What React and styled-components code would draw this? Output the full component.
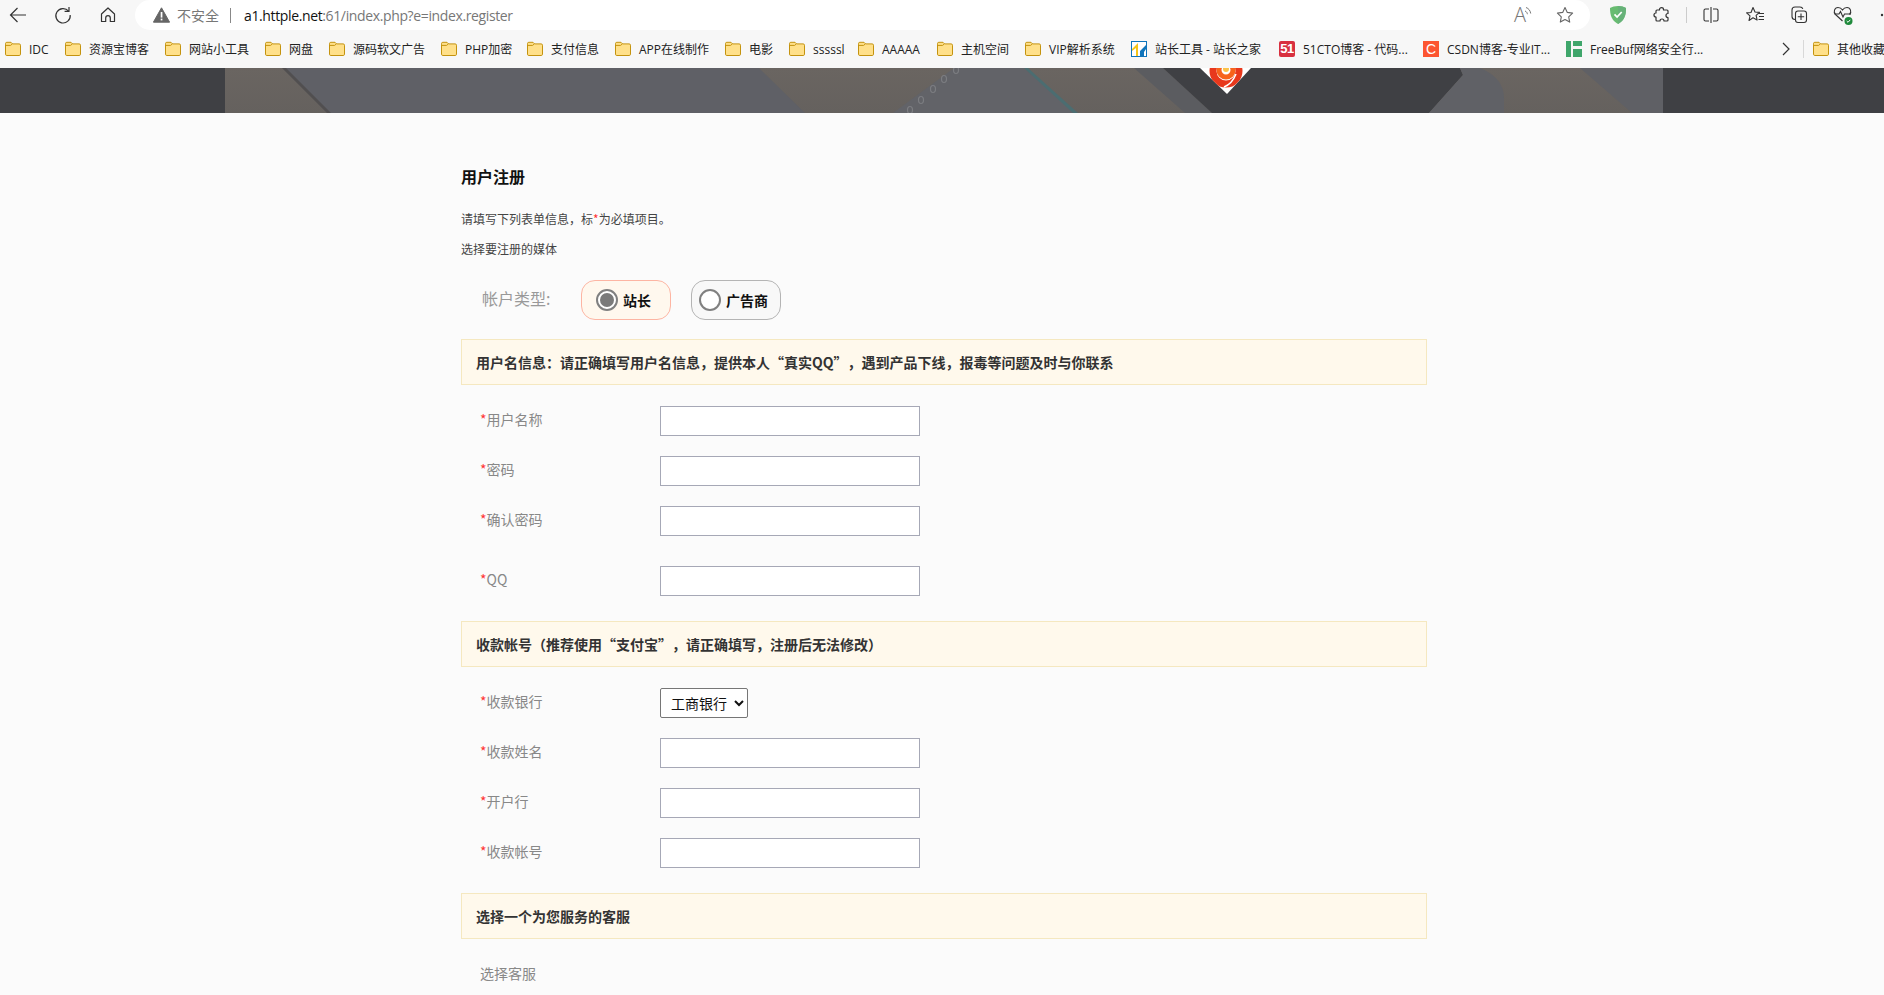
import React from "react";
import styled, { createGlobalStyle } from "styled-components";

const CN = `"Noto Sans CJK SC", "Noto Sans", sans-serif`;
const UI = `"Open Sans", "Noto Sans CJK SC", sans-serif`;

const GlobalStyle = createGlobalStyle`
  html, body {
    margin: 0;
    height: 995px;
    overflow: hidden;
    background: #fbfbfb;
    font-family: ${CN};
  }
  * { box-sizing: border-box; }
`;

const Toolbar = styled.div`
  height: 30px;
  background: #f7f7f7;
  display: flex;
  align-items: center;
`;

const NavGroup = styled.div`
  display: flex;
  gap: 9px;
  width: 135px;
  flex: none;
`;

const NavSlot = styled.span`
  width: 36px;
  height: 30px;
  display: flex;
  align-items: center;
  justify-content: center;
  color: #333;
`;

const Omnibox = styled.div`
  width: 1455px;
  height: 30px;
  flex: none;
  background: #fff;
  border-radius: 15px;
  display: flex;
  align-items: center;
  padding: 0 15px 0 18px;
`;

const Insecure = styled.span`
  font: 14px ${CN};
  color: #777;
  margin-left: 7px;
`;

const UrlDivider = styled.i`
  width: 1px;
  height: 15px;
  background: #888;
  margin: 0 13px 0 11px;
`;

const Url = styled.span`
  font: 14px ${UI};
  letter-spacing: -0.37px;
  color: #777;
  b { font-weight: 400; color: #111; }
`;

const OmniIcons = styled.div`
  margin-left: auto;
  display: flex;
  align-items: center;
  gap: 19px;
`;

const ReadAloud = styled.span`
  display: flex;
  align-items: flex-start;
  font: 300 20px "Open Sans", sans-serif;
  line-height: 22px;
  color: #777;
  width: 22px;
`;

const Tools = styled.div`
  display: flex;
  align-items: center;
  margin-left: 6px;
  flex: 1;
`;

const ToolSlot = styled.span`
  width: 44px;
  height: 30px;
  flex: none;
  display: flex;
  align-items: center;
  justify-content: center;
  color: #333;
`;

const ToolDivider = styled.i`
  width: 1px;
  height: 16px;
  background: #ccc;
  flex: none;
  margin: 0 2px;
`;

const MoreDots = styled.span`
  margin-left: 15px;
  display: flex;
`;

const Bookmarks = styled.div`
  height: 38px;
  background: #f7f7f7;
  display: flex;
  align-items: center;
  padding-left: 5px;
  overflow: hidden;
`;

const Bookmark = styled.span`
  width: ${(p) => p.$w}px;
  flex: none;
  display: flex;
  align-items: center;
  gap: 8px;
  font: 12px ${UI};
  color: #222;
  white-space: nowrap;
`;

const Chevron = styled.span`
  width: 31px;
  flex: none;
  display: flex;
  padding-left: 9px;
  color: #333;
`;

const BarDivider = styled.i`
  width: 1px;
  height: 18px;
  background: #d8d8d8;
  flex: none;
  margin-right: 9px;
`;

const Favicon51 = styled.span`
  width: 16px;
  height: 16px;
  flex: none;
  background: #d8303f;
  color: #fff;
  border-radius: 2px;
  font: 700 13px/16px "Liberation Sans", sans-serif;
  letter-spacing: -0.5px;
  text-align: center;
`;

const FaviconC = styled.span`
  width: 16px;
  height: 16px;
  flex: none;
  background: #fc5531;
  color: #fff;
  font: 400 14px/16px "Liberation Sans", sans-serif;
  text-align: center;
`;

const Hero = styled.svg`
  display: block;
  width: 100%;
  height: 45px;
`;

const Main = styled.main`
  width: 966px;
  margin-left: 461px;
  padding-top: 51px;
`;

const Title = styled.h1`
  margin: 0;
  font: 700 16px/24px ${CN};
  color: #111;
`;

const Hint = styled.p`
  margin: ${(p) => p.$top}px 0 0;
  font: 12px/20px ${CN};
  color: #444;
`;

const Req = styled.span`
  color: #f33;
`;

const TypeRow = styled.div`
  margin-top: 21px;
  padding-left: 21px;
  display: flex;
  align-items: center;
  gap: 20px;
  height: 40px;
`;

const TypeLabel = styled.span`
  width: 79px;
  font: 16px/20px ${CN};
  color: #999;
  white-space: nowrap;
  margin-top: -5px;
`;

const Pill = styled.label`
  width: 90px;
  height: 40px;
  display: flex;
  align-items: center;
  gap: 5px;
  padding-left: ${(p) => (p.$active ? 14 : 7)}px;
  border-radius: 14px;
  border: 1px solid ${(p) => (p.$active ? "#fdb5a3" : "#b4b4b4")};
  background: ${(p) => (p.$active ? "#fff8ee" : "#f8f8f8")};
  font: 700 14px/20px ${CN};
  color: #111;
`;

const Radio = styled.input.attrs({ type: "radio" })`
  appearance: none;
  width: 22px;
  height: 22px;
  margin: 0;
  flex: none;
  border-radius: 50%;
  border: 2px solid #808080;
  background: #fff;
  display: grid;
  place-items: center;
  &:checked::before {
    content: "";
    width: 14px;
    height: 14px;
    border-radius: 50%;
    background: #7a7a7a;
  }
`;

const Notice = styled.div`
  margin-top: ${(p) => p.$top}px;
  height: 46px;
  display: flex;
  align-items: center;
  padding-left: 14px;
  background: #fff9ec;
  border: 1px solid #f5e8c0;
  font: 700 14px ${CN};
  color: #333;
  text-spacing-trim: space-all;
`;

const Field = styled.div`
  margin-top: ${(p) => p.$top}px;
  padding-left: 19px;
  display: flex;
  align-items: center;
`;

const FieldLabel = styled.span`
  width: 180px;
  font: 14px/20px ${CN};
  color: #888;
  margin-top: -4px;
`;

const TextInput = styled.input`
  width: 260px;
  height: 30px;
  border: 1px solid #a6a8b6;
  background: #fff;
  border-radius: 0;
  outline: none;
`;

const BankSelect = styled.select`
  width: 88px;
  height: 30px;
  padding-left: 6px;
  border: 1px solid #767676;
  border-radius: 2px;
  background: #fff;
  font: 14px ${CN};
  color: #111;
`;

const ServiceLabel = styled.div`
  margin-top: 24px;
  padding-left: 19px;
  font: 14px/20px ${CN};
  color: #888;
`;

const Folder = () => (
  <svg width="16" height="16" viewBox="0 0 16 16" style={{ flex: "none" }}>
    <path d="M.5 3.800V2.600C.5 1.800 1 1.300 1.800 1.300H6l1.600 1.600h6.600c.8 0 1.300.5 1.300 1.300v9c0 .8-.5 1.300-1.300 1.300H1.800c-.8 0-1.300-.5-1.300-1.300z" fill="#ffe08a" stroke="#c4930f" strokeWidth="1" />
    <path d="M.5 4.400H5.600L7.400 2.900" fill="none" stroke="#c4930f" strokeWidth="1" />
  </svg>
);

const ChinazIcon = () => (
  <svg width="16" height="16" viewBox="0 0 16 16" style={{ flex: "none" }}>
    <rect x=".5" y=".5" width="15" height="15" fill="#fff" stroke="#0f74bb" />
    <path d="M1 8 7 2v13H5V7L1 10z" fill="#f5c518" />
    <path d="M9 15V10l6-6v4l-2 3v4z" fill="#0f74bb" />
  </svg>
);

const FreeBufIcon = () => (
  <svg width="16" height="16" viewBox="0 0 16 16" style={{ flex: "none" }}>
    <rect x="0" y="0" width="5" height="16" fill="#3fa66b" />
    <rect x="7" y="0" width="9" height="5" fill="#3fa66b" />
    <rect x="7" y="8" width="9" height="8" fill="#3fa66b" />
  </svg>
);

const BackIcon = () => (
  <svg width="20" height="20" viewBox="0 0 20 20" fill="none" stroke="currentColor" strokeWidth="1.2">
    <path d="M18 10H2.500M9.500 3l-7 7 7 7" />
  </svg>
);

const RefreshIcon = () => (
  <svg width="20" height="20" viewBox="0 0 20 20" fill="none" stroke="currentColor" strokeWidth="1.2">
    <path d="M15.600 6.200A7.200 7.200 0 1 0 17.200 10" />
    <path d="M16 2v4.400h-4.400" />
  </svg>
);

const HomeIcon = () => (
  <svg width="20" height="20" viewBox="0 0 20 20" fill="none" stroke="currentColor" strokeWidth="1.2">
    <path d="M10 3 3.500 9v7.500h4.200V13a2.300 2.300 0 0 1 4.600 0v3.500h4.200V9z" strokeLinejoin="round" />
  </svg>
);

const WarnIcon = () => (
  <svg width="17" height="16" viewBox="0 0 17 16">
    <path d="M8.500.8 16.600 15.200H.4z" fill="#666" stroke="#666" strokeLinejoin="round" />
    <rect x="7.700" y="5" width="1.700" height="5.600" fill="#fff" />
    <rect x="7.700" y="11.600" width="1.700" height="1.800" fill="#fff" />
  </svg>
);

const WavesIcon = () => (
  <svg width="8" height="12" viewBox="0 0 8 12" fill="none" stroke="#777" strokeWidth="1" style={{ marginLeft: -2, marginTop: 1 }}>
    <path d="M1 6c1.500.5 2.200 1.800 2.400 3.200M2 2.500c2.800 1 4.300 3.200 4.700 6" />
  </svg>
);

const StarIcon = () => (
  <svg width="20" height="20" viewBox="0 0 20 20" fill="none" stroke="#666" strokeWidth="1.1" strokeLinejoin="round">
    <path d="m10 2.500 2.300 4.900 5.300.7-3.900 3.700 1 5.300L10 14.500l-4.700 2.600 1-5.300-3.900-3.700 5.300-.7z" />
  </svg>
);

const ShieldIcon = () => (
  <svg width="18" height="20" viewBox="0 0 18 20">
    <path d="M9 1C6 1 3 1.800 1 3c0 7 1.500 12.500 8 16 6.500-3.500 8-9 8-16-2-1.200-5-2-8-2z" fill="#68bc71" />
    <path d="M9 1c3 0 6 .8 8 2 0 7-1.500 12.500-8 16z" fill="#67b279" />
    <path d="m5.500 9.300 2.600 2.700 4.600-5" fill="none" stroke="#fff" strokeWidth="1.7" />
  </svg>
);

const PuzzleIcon = () => (
  <svg width="20" height="20" viewBox="0 0 20 20" fill="none" stroke="currentColor" strokeWidth="1.2" strokeLinejoin="round">
    <path d="M7.500 4.500c0-2.500 4-2.500 4 0V5H15c.6 0 1 .4 1 1v2.500c-2.700 0-2.700 4 0 4V15c0 .6-.4 1-1 1h-3c0-2.700-4-2.700-4 0H5c-.6 0-1-.4-1-1v-3c-2.700 0-2.700-4 0-4V6c0-.6.4-1 1-1h2.500z" />
  </svg>
);

const SplitIcon = () => (
  <svg width="18" height="18" viewBox="0 0 18 18" fill="none" stroke="currentColor" strokeWidth="1.1">
    <path d="M7 3H3.500A1.500 1.500 0 0 0 2 4.500v9A1.500 1.500 0 0 0 3.500 15H7M11 3h3.500A1.500 1.500 0 0 1 16 4.500v9a1.500 1.500 0 0 1-1.500 1.500H11M9 1v16" />
  </svg>
);

const FavoritesIcon = () => (
  <svg width="20" height="20" viewBox="0 0 20 20" fill="none" stroke="currentColor" strokeWidth="1.1" strokeLinejoin="round">
    <path d="M8 2.500 10 7l4.500.4-3.400 3 1 4.600L8 12.700 4 15.500l1-4.600-3.400-3L6 7.500z" />
    <path d="M13.500 8.500H19M14 11.500h5M13.500 14.500H19" />
  </svg>
);

const CollectionsIcon = () => (
  <svg width="20" height="20" viewBox="0 0 20 20" fill="none" stroke="currentColor" strokeWidth="1.1">
    <path d="M6 14.500c-2 0-3-1-3-3V5c0-2 1-3 3-3h5c1.500 0 2.500.7 2.800 2" />
    <rect x="6.500" y="6" width="11" height="11.500" rx="2.500" />
    <path d="M12 8.500v6.500M8.800 11.800h6.400" />
  </svg>
);

const HealthIcon = () => (
  <svg width="22" height="22" viewBox="0 0 22 22" fill="none">
    <path d="M10.500 17 3.500 10.500C1 8 2.500 3.500 6 3.500c2 0 3.500 1 4.500 2.500 1-1.500 2.500-2.500 4.500-2.500 3.500 0 5 4.500 2.500 7" stroke="currentColor" strokeWidth="1.1" />
    <path d="M2.500 10H7l1.500-2.500L11 13l1.500-3H19" stroke="currentColor" strokeWidth="1.1" />
    <circle cx="16.500" cy="17" r="4" fill="#1f8a3c" />
    <path d="m14.700 17 1.300 1.300 2.300-2.500" stroke="#fff" strokeWidth="1" />
  </svg>
);

const MoreIcon = () => (
  <svg width="4" height="4" viewBox="0 0 4 4">
    <circle cx="2" cy="2" r="1.2" fill="#333" />
  </svg>
);

const ChevronIcon = () => (
  <svg width="10" height="14" viewBox="0 0 10 14" fill="none" stroke="currentColor" strokeWidth="1.2">
    <path d="m2 1 6 6-6 6" />
  </svg>
);

const bookmarks = [
  ["IDC", 60],
  ["资源宝博客", 100],
  ["网站小工具", 100],
  ["网盘", 64],
  ["源码软文广告", 112],
  ["PHP加密", 86],
  ["支付信息", 88],
  ["APP在线制作", 110],
  ["电影", 64],
  ["sssssl", 69],
  ["AAAAA", 79],
  ["主机空间", 88],
  ["VIP解析系统", 106],
];

const banks = ["工商银行", "建设银行", "农业银行", "招商银行", "支付宝"];

function HeroArt() {
  return (
    <Hero viewBox="0 0 1884 45" preserveAspectRatio="none">
      <defs>
        <clipPath id="logoClip">
          <path d="M1200 0h51l-24 26z" />
        </clipPath>
        <linearGradient id="wood" x1="0" y1="0" x2="0" y2="1">
          <stop offset="0" stopColor="#6a6561" />
          <stop offset="1" stopColor="#65615e" />
        </linearGradient>
      </defs>
      <rect width="1884" height="45" fill="#3f4044" />
      <rect x="225" width="1438" height="45" fill="url(#wood)" />
      <path d="M284 0h475l46 45H329z" fill="#5f6066" />
      <path d="M282 0 327 45h4L286 0z" fill="#514f50" />
      <path d="M954 0h70l51 45H893z" fill="#626368" />
      <path d="M1024 0h4l50 45h-5z" fill="#4b6d71" />
      <g fill="none" stroke="#7c7d81" strokeWidth="1.2">
        <ellipse cx="956" cy="2" rx="2.500" ry="3.500" />
        <ellipse cx="944" cy="11" rx="2.500" ry="3.500" />
        <ellipse cx="933" cy="21" rx="2.500" ry="3.500" />
        <ellipse cx="921" cy="32" rx="2.500" ry="3.500" />
        <ellipse cx="910" cy="42" rx="2.500" ry="3.500" />
      </g>
      <path d="M1134 0h29l49 45h-27z" fill="#5b5c60" />
      <path d="M1163 0h297l3 7-34 38h-217z" fill="#3f4044" />
      <path d="M1460 0l3 7-34 38h75V30q0-20-24-30z" fill="#606166" />
      <path d="M1580 0h83v45h-31z" fill="#5f6065" />
      <path d="M1200 0h51l-24 26z" fill="#fff" />
      <g clipPath="url(#logoClip)" fill="none">
        <circle cx="1226" cy="3" r="13" stroke="#e8381c" strokeWidth="7" />
        <circle cx="1226" cy="2" r="7" stroke="#f7631b" strokeWidth="5" />
        <circle cx="1226" cy="1" r="3" fill="#fbc34a" />
        <path d="M1236 6q-4 10-12 13" stroke="#fff" strokeWidth="1.5" />
      </g>
    </Hero>
  );
}

function Row({ label, top, children }) {
  return (
    <Field $top={top}>
      <FieldLabel>
        <Req>*</Req>
        {label}
      </FieldLabel>
      {children}
    </Field>
  );
}

export default function App() {
  return (
    <>
      <GlobalStyle />
      <Toolbar>
        <NavGroup>
          <NavSlot><BackIcon /></NavSlot>
          <NavSlot><RefreshIcon /></NavSlot>
          <NavSlot><HomeIcon /></NavSlot>
        </NavGroup>
        <Omnibox>
          <WarnIcon />
          <Insecure>不安全</Insecure>
          <UrlDivider />
          <Url><b>a1.httple.net</b>:61/index.php?e=index.register</Url>
          <OmniIcons>
            <ReadAloud>A<WavesIcon /></ReadAloud>
            <StarIcon />
          </OmniIcons>
        </Omnibox>
        <Tools>
          <ToolSlot><ShieldIcon /></ToolSlot>
          <ToolSlot><PuzzleIcon /></ToolSlot>
          <ToolDivider />
          <ToolSlot><SplitIcon /></ToolSlot>
          <ToolSlot><FavoritesIcon /></ToolSlot>
          <ToolSlot><CollectionsIcon /></ToolSlot>
          <ToolSlot><HealthIcon /></ToolSlot>
          <MoreDots><MoreIcon /></MoreDots>
        </Tools>
      </Toolbar>
      <Bookmarks>
        {bookmarks.map(([name, w]) => (
          <Bookmark key={name} $w={w}>
            <Folder />
            {name}
          </Bookmark>
        ))}
        <Bookmark $w={148}><ChinazIcon />站长工具 - 站长之家</Bookmark>
        <Bookmark $w={144}><Favicon51>51</Favicon51>51CTO博客 - 代码...</Bookmark>
        <Bookmark $w={143}><FaviconC>C</FaviconC>CSDN博客-专业IT...</Bookmark>
        <Bookmark $w={206}><FreeBufIcon />FreeBuf网络安全行...</Bookmark>
        <Chevron><ChevronIcon /></Chevron>
        <BarDivider />
        <Bookmark $w={60}><Folder />其他收藏夹</Bookmark>
      </Bookmarks>
      <HeroArt />
      <Main>
        <Title>用户注册</Title>
        <Hint $top={21}>请填写下列表单信息，标<Req>*</Req>为必填项目。</Hint>
        <Hint $top={10}>选择要注册的媒体</Hint>
        <TypeRow>
          <TypeLabel>帐户类型:</TypeLabel>
          <Pill $active>
            <Radio name="type" defaultChecked />
            站长
          </Pill>
          <Pill>
            <Radio name="type" />
            广告商
          </Pill>
        </TypeRow>
        <Notice $top={19}>用户名信息：请正确填写用户名信息，提供本人“真实QQ”，遇到产品下线，报毒等问题及时与你联系</Notice>
        <Row label="用户名称" top={21}><TextInput /></Row>
        <Row label="密码" top={20}><TextInput type="password" /></Row>
        <Row label="确认密码" top={20}><TextInput type="password" /></Row>
        <Row label="QQ" top={30}><TextInput /></Row>
        <Notice $top={25}>收款帐号（推荐使用“支付宝”，请正确填写，注册后无法修改）</Notice>
        <Row label="收款银行" top={21}>
          <BankSelect>
            {banks.map((b) => <option key={b}>{b}</option>)}
          </BankSelect>
        </Row>
        <Row label="收款姓名" top={20}><TextInput /></Row>
        <Row label="开户行" top={20}><TextInput /></Row>
        <Row label="收款帐号" top={20}><TextInput /></Row>
        <Notice $top={25}>选择一个为您服务的客服</Notice>
        <ServiceLabel>选择客服</ServiceLabel>
      </Main>
    </>
  );
}
